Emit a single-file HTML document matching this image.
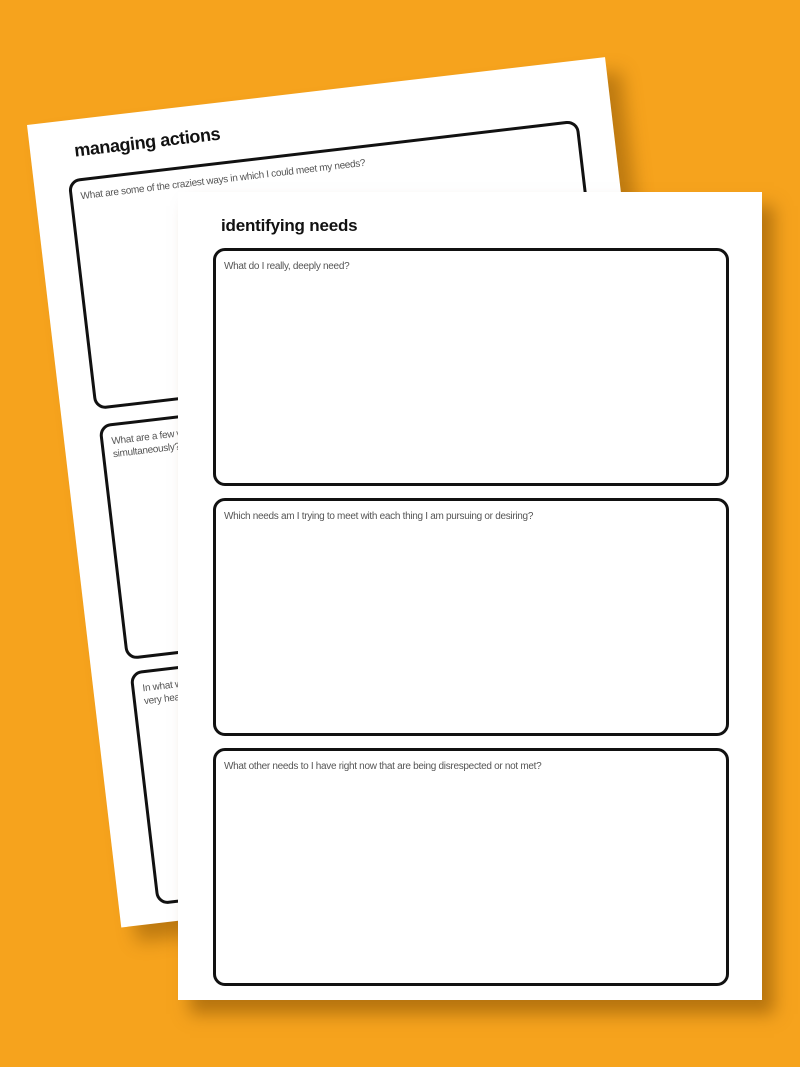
<!DOCTYPE html>
<html><head><style>
html,body{margin:0;padding:0}
body{width:800px;height:1067px;background:#F6A31D;position:relative;overflow:hidden;font-family:"Liberation Sans",sans-serif}
.page{position:absolute;background:#fff}
.back{left:27px;top:125px;width:582px;height:808px;transform-origin:0 0;transform:rotate(-6.7deg);box-shadow:14px 16px 18px rgba(120,70,0,.45)}
.front{left:178px;top:192px;width:584px;height:808px;box-shadow:12px 14px 16px rgba(120,70,0,.5)}
.box{position:absolute;border:3px solid #111;border-radius:12px;box-sizing:border-box}
.box span{position:absolute;left:8px;top:9px;font-size:10px;color:#555;letter-spacing:-.3px;line-height:13px}
h1{position:absolute;margin:0;font-weight:bold;color:#111}
</style></head><body>
<div class="page back">
<h1 style="left:44px;top:21px;font-size:18px;letter-spacing:-.4px">managing actions</h1>
<div class="box" style="left:34px;top:59px;width:514px;height:232px"><span>What are some of the craziest ways in which I could meet my needs?</span></div>
<div class="box" style="left:36px;top:306px;width:512px;height:237px"><span>What are a few ways in which I could meet several needs<br>simultaneously?</span></div>
<div class="box" style="left:38px;top:555px;width:510px;height:235px"><span>In what ways could I meet my needs that are<br>very healthy?</span></div>
</div>
<div class="page front">
<h1 style="left:43px;top:24px;font-size:17px;letter-spacing:-.2px">identifying needs</h1>
<div class="box" style="left:35px;top:56px;width:516px;height:238px"><span>What do I really, deeply need?</span></div>
<div class="box" style="left:35px;top:306px;width:516px;height:238px"><span>Which needs am I trying to meet with each thing I am pursuing or desiring?</span></div>
<div class="box" style="left:35px;top:556px;width:516px;height:238px"><span>What other needs to I have right now that are being disrespected or not met?</span></div>
</div>
</body></html>
